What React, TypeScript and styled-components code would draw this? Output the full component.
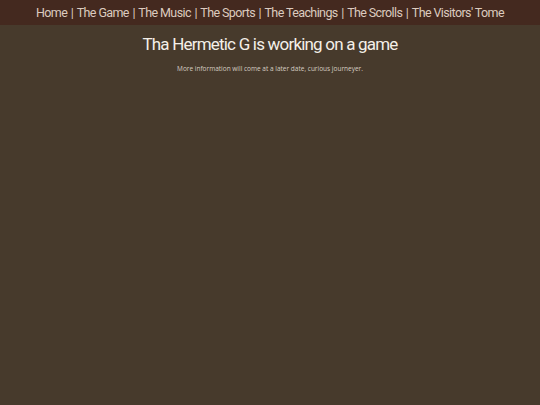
import styled, { createGlobalStyle } from 'styled-components'

const GlobalStyle = createGlobalStyle`
  html, body {
    margin: 0;
    padding: 0;
    height: 100%;
    background: #473a2c;
  }
  #root {
    min-height: 100%;
  }
`

const links = [
  'Home',
  'The Game',
  'The Music',
  'The Sports',
  'The Teachings',
  'The Scrolls',
  "The Visitors' Tome",
]

const Page = styled.div`
  min-height: 405px;
  background: #473a2c;
  font-family: Roboto, sans-serif;
`

const NavBar = styled.nav`
  height: 25px;
  background: #44291f;
  display: flex;
  align-items: center;
  justify-content: center;
  color: #dccbbf;
  font-size: 12.5px;
  letter-spacing: -0.6px;
  white-space: nowrap;
`

const NavLink = styled.a`
  color: inherit;
  text-decoration: none;
`

const Separator = styled.span`
  margin: 0 3.5px;
`

const Main = styled.main`
  display: flex;
  flex-direction: column;
  align-items: center;
  padding-top: 9px;
`

const Title = styled.h1`
  margin: 0;
  color: #f4efe8;
  font-size: 17px;
  font-weight: 400;
  letter-spacing: -0.8px;
`

const Subtitle = styled.p`
  margin: 10px 0 0;
  color: #d6cdc2;
  font-family: 'Open Sans', sans-serif;
  font-size: 6.5px;
`

export default function App() {
  return (
    <>
      <GlobalStyle />
      <Page>
        <NavBar>
          {links.map((label, i) => (
            <span key={label}>
              {i > 0 && <Separator>|</Separator>}
              <NavLink href="#">{label}</NavLink>
            </span>
          ))}
        </NavBar>
        <Main>
          <Title>Tha Hermetic G is working on a game</Title>
          <Subtitle>More information will come at a later date, curious journeyer.</Subtitle>
        </Main>
      </Page>
    </>
  )
}
